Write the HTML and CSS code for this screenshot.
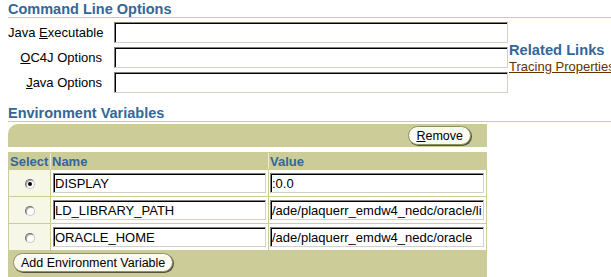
FILE: index.html
```html
<!DOCTYPE html>
<html>
<head>
<meta charset="utf-8">
<title>Command Line Options</title>
<link rel="stylesheet" href="styles.css">
</head>
<body>
<h2 class="section-title">Command Line Options</h2>
<div class="options">
  <div class="options-grid">
    <label class="opt-label">Java <u>E</u>xecutable</label>
    <input class="field opt-field" type="text">
    <label class="opt-label"><u>O</u>C4J Options</label>
    <input class="field opt-field" type="text">
    <label class="opt-label"><u>J</u>ava Options</label>
    <input class="field opt-field" type="text">
  </div>
  <div class="related">
    <div class="related-title">Related Links</div>
    <a class="related-link" href="#">Tracing Properties</a>
  </div>
</div>

<h2 class="section-title env-title">Environment Variables</h2>
<div class="env">
  <div class="env-bar"><button class="pill" type="button"><u>R</u>emove</button></div>
  <table class="env-table">
    <thead>
      <tr>
        <th class="col-select">Select</th>
        <th class="col-name">Name</th>
        <th class="col-value">Value</th>
      </tr>
    </thead>
    <tbody>
      <tr>
        <td class="cell-select"><span class="radio radio-on"></span></td>
        <td class="cell-name"><input class="field cell-field" type="text" value="DISPLAY"></td>
        <td class="cell-value"><input class="field cell-field" type="text" value=":0.0"></td>
      </tr>
      <tr>
        <td class="cell-select"><span class="radio"></span></td>
        <td class="cell-name"><input class="field cell-field" type="text" value="LD_LIBRARY_PATH"></td>
        <td class="cell-value"><input class="field cell-field" type="text" value="/ade/plaquerr_emdw4_nedc/oracle/lib"></td>
      </tr>
      <tr>
        <td class="cell-select"><span class="radio"></span></td>
        <td class="cell-name"><input class="field cell-field" type="text" value="ORACLE_HOME"></td>
        <td class="cell-value"><input class="field cell-field" type="text" value="/ade/plaquerr_emdw4_nedc/oracle"></td>
      </tr>
    </tbody>
    <tfoot>
      <tr>
        <td class="footer-cell" colspan="3"><button class="pill" type="button">Add Environment Variable</button></td>
      </tr>
    </tfoot>
  </table>
</div>
</body>
</html>
```

FILE: styles.css
```css
html, body {
  margin: 0;
  padding: 0;
  overflow: hidden;
  background: #ffffff;
}

body {
  width: 611px;
  font-family: "Liberation Sans", Arial, sans-serif;
  font-size: 13px;
  color: #000000;
}

.section-title {
  margin: 0 0 0 8px;
  padding-top: 1px;
  font-size: 14.5px;
  line-height: 16px;
  font-weight: bold;
  color: #336699;
  border-bottom: 1px solid #cccc99;
}

.options {
  display: flex;
  margin-top: 4px;
  padding-left: 8px;
}

.options-grid {
  display: grid;
  grid-template-columns: 94px 394px;
  column-gap: 12px;
  row-gap: 4px;
  flex-shrink: 0;
}

.opt-label {
  text-align: right;
  align-self: center;
  white-space: nowrap;
  font-size: 13px;
}

.field {
  box-sizing: border-box;
  margin: 0;
  padding: 0 1px;
  border: 1px solid;
  border-color: #808080 #d4d0c8 #d4d0c8 #808080;
  box-shadow: inset 1px 1px 0 #000000;
  background: #ffffff;
  font-family: "Liberation Sans", Arial, sans-serif;
  font-size: 13px;
  color: #000000;
  outline: none;
}

.opt-field {
  width: 100%;
  height: 21px;
}

.related {
  align-self: center;
  margin-left: 1px;
  flex-shrink: 0;
  white-space: nowrap;
}

.related-title {
  font-size: 14.7px;
  line-height: 16px;
  font-weight: bold;
  color: #336699;
}

.related-link {
  display: block;
  margin-top: 1px;
  font-size: 13px;
  line-height: 15px;
  color: #663300;
  text-decoration: underline;
}

.env-title {
  margin-top: 11px;
}

.env {
  margin-left: 8px;
  width: 479px;
}

.env-bar {
  box-sizing: border-box;
  height: 23px;
  margin-top: 2px;
  padding-right: 16px;
  background: #cccc99;
  border-top-left-radius: 10px;
  display: flex;
  justify-content: flex-end;
  align-items: center;
}

.pill {
  box-sizing: border-box;
  height: 19px;
  margin: 0;
  padding: 0 7px;
  border: 1px solid #8f8f70;
  border-radius: 10px;
  background: #fbfbf1;
  box-shadow: 1px 1px 0 #55553f;
  font-family: "Liberation Sans", Arial, sans-serif;
  font-size: 12.5px;
  line-height: 16px;
  color: #000000;
  white-space: nowrap;
}

.env-table {
  margin-top: 5px;
  width: 479px;
  table-layout: fixed;
  border-spacing: 1px;
  background: #cccc99;
}

.env-table th {
  box-sizing: border-box;
  height: 16px;
  padding: 2px 1px 0;
  line-height: 14px;
  font-size: 13px;
  font-weight: bold;
  text-align: left;
  vertical-align: top;
  color: #336699;
  background: #cccc99;
}

.env-table th:not(:last-child) {
  box-shadow: 1px 0 0 #ecebd8;
}

.col-select { width: 41px; }
.col-name { width: 217px; }
.col-value { width: 217px; }

.env-table td {
  box-sizing: border-box;
  height: 26px;
  padding: 3px 2px;
  vertical-align: middle;
  background: #ffffff;
}

.env-table td.cell-value {
  padding-left: 1px;
}

.env-table td.cell-select {
  background: #f7f7e7;
  text-align: center;
  padding: 3px 0 3px 1px;
}

.cell-field {
  display: block;
  width: 100%;
  height: 20px;
}

.radio {
  display: inline-block;
  position: relative;
  box-sizing: border-box;
  width: 10px;
  height: 10px;
  border-radius: 50%;
  border: 1px solid;
  border-color: #6f6f6f #c8c8c8 #c8c8c8 #6f6f6f;
  box-shadow: inset 1px 1px 0 #a8a8a8;
  background: #ffffff;
  vertical-align: middle;
}

.radio-on::after {
  content: "";
  position: absolute;
  left: 2px;
  top: 2px;
  width: 4px;
  height: 4px;
  border-radius: 50%;
  background: #000000;
}

.env-table td.footer-cell {
  height: auto;
  padding: 2px 4px 5px;
  background: #cccc99;
  text-align: left;
}
```
